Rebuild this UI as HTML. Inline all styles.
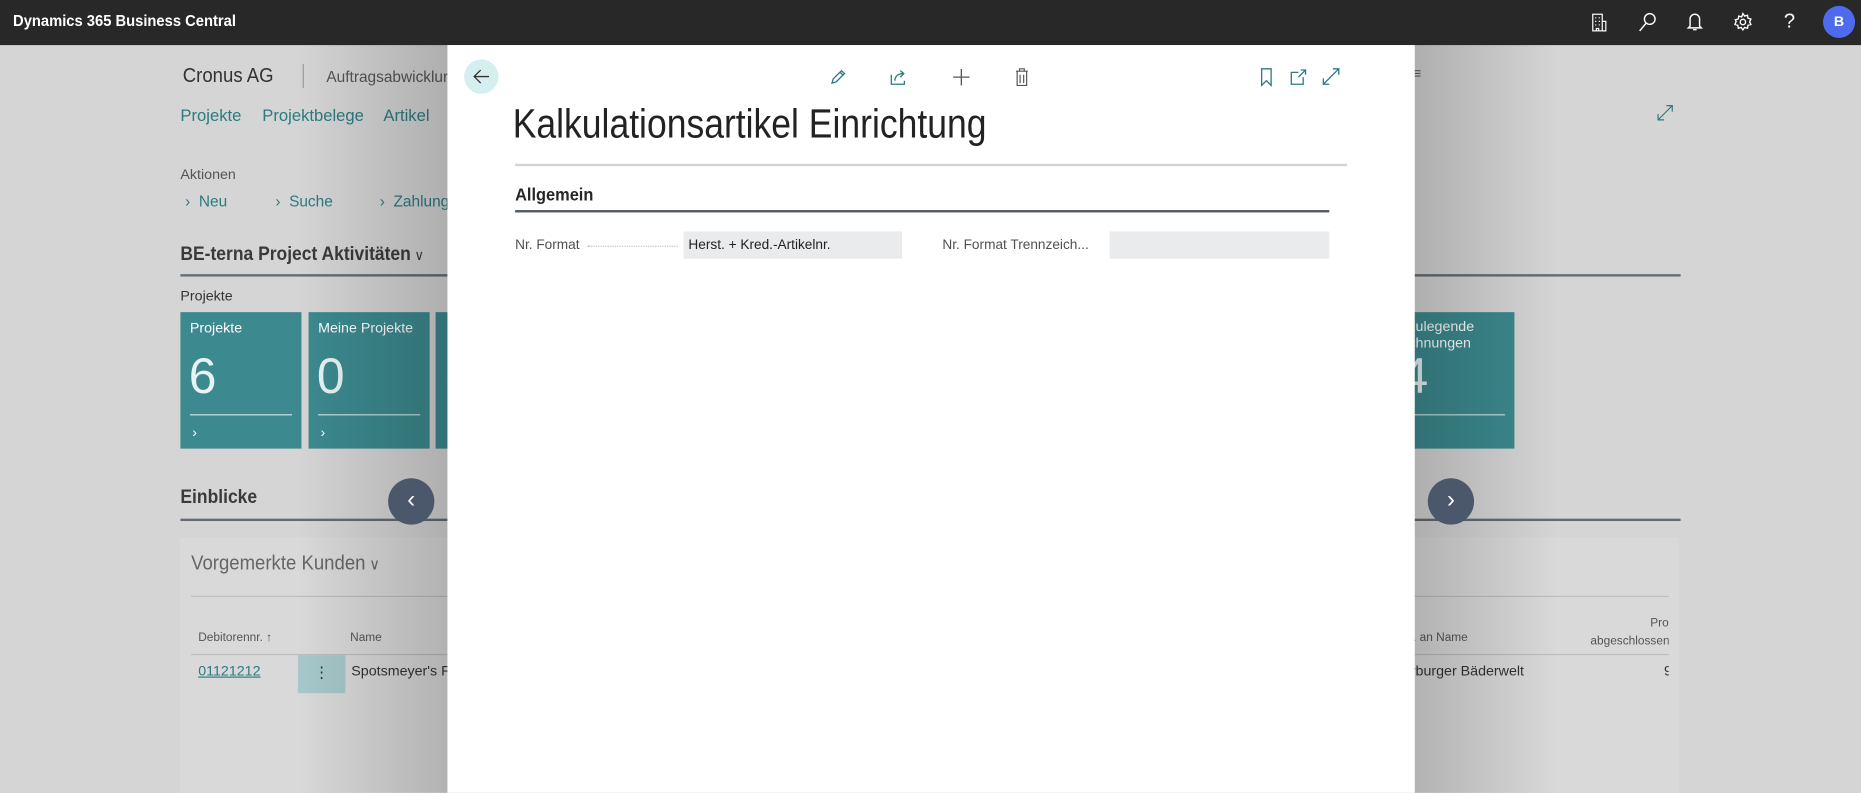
<!DOCTYPE html>
<html><head><meta charset="utf-8"><style>
*{margin:0;padding:0;box-sizing:border-box}
html,body{width:1861px;height:793px;overflow:hidden;background:#d5d5d5;font-family:"Liberation Sans",sans-serif}
#w{position:absolute;left:0;top:0;width:1568px;height:668px;transform:scale(1.18686);transform-origin:0 0;background:#d5d5d5;overflow:hidden}
.a{position:absolute;white-space:nowrap}
.teal{color:#2b7b80}
.tile{position:absolute;top:263px;height:115px;background:#3c8a8f;color:#fff}
.tile .t{position:absolute;left:8px;top:6px;font-size:12px}
.tile .n{position:absolute;left:7px;top:30px;font-size:42px;font-weight:300;color:#e8f3f3}
.tile .l{position:absolute;left:8px;right:8px;top:86px;height:1px;background:#cfe3e4}
.tile .c{position:absolute;left:10px;top:94px;font-size:12px}
svg{position:absolute}
.n9{transform:scaleX(.92);transform-origin:0 0}
</style></head><body><div id="w">
<div class="a" style="left:0;top:0;width:1568px;height:38px;background:#282828"></div>
<div class="a n9" style="left:11px;top:10px;color:#fff;font-weight:bold;font-size:13.5px">Dynamics 365 Business Central</div>
<svg style="left:1340px;top:11px" width="14" height="16" viewBox="0 0 14 16" fill="none" stroke="#fff" stroke-width="1"><rect x="2" y="1" width="8" height="14"/><path d="M10 7h3v8h-3M4 4h1M7 4h1M4 7h1M7 7h1M4 10h1M7 10h1M5 15v-2h2v2"/></svg>
<svg style="left:1380px;top:10px" width="16" height="17" viewBox="0 0 16 17" fill="none" stroke="#fff" stroke-width="1.2"><circle cx="10" cy="6" r="4.5"/><path d="M7 9.5L1.5 16"/></svg>
<svg style="left:1421px;top:10px" width="14" height="17" viewBox="0 0 14 17" fill="none" stroke="#fff" stroke-width="1.2"><path d="M3 12V6a4 4 0 018 0v6l1.5 1.5h-11z M5.5 15h3"/></svg>
<svg style="left:1460px;top:10px" width="17" height="17" viewBox="0 0 24 24" fill="none" stroke="#fff" stroke-width="1.6"><circle cx="12" cy="12" r="3.2"/><path d="M12 2l2 3 3.5-1 .5 3.5 3.5 1-1.5 3.5 1.5 3-3.5 1-.5 3.5-3.5-1-2 3-2-3-3.5 1-.5-3.5-3.5-1 1.5-3.5L3 9.5l3.5-1L7 5l3.5 1z"/></svg>
<div class="a" style="left:1503px;top:8px;color:#fff;font-size:17px">?</div>
<div class="a" style="left:1536px;top:5px;width:27px;height:27px;border-radius:50%;background:#4f6bed;color:#fff;font-size:12px;font-weight:bold;text-align:center;line-height:27px">B</div>

<div class="a n9" style="left:154px;top:54px;font-size:17px;color:#333">Cronus AG</div>
<div class="a" style="left:255px;top:54px;width:1px;height:20px;background:#999"></div>
<div class="a" style="left:275px;top:57px;font-size:13px;color:#555">Auftragsabwicklung</div>
<div class="a teal" style="left:152px;top:89px;font-size:14px">Projekte</div>
<div class="a teal" style="left:221px;top:89px;font-size:14px">Projektbelege</div>
<div class="a teal" style="left:323px;top:89px;font-size:14px">Artikel</div>
<div class="a" style="left:1190px;top:54px;font-size:13px;color:#666">≡</div>
<svg style="left:1396px;top:88px" width="14" height="14" viewBox="0 0 14 14" fill="none" stroke="#2b7b80" stroke-width="1"><path d="M1 13L13 1M8 1h5v5M1 8v5h5"/></svg>
<div class="a" style="left:152px;top:140px;font-size:12px;color:#555">Aktionen</div>
<div class="a teal" style="left:156px;top:162px;font-size:13px">›&nbsp; Neu</div>
<div class="a teal" style="left:232px;top:162px;font-size:13px">›&nbsp; Suche</div>
<div class="a teal" style="left:320px;top:162px;font-size:13px">›&nbsp; Zahlungen</div>
<div class="a n9" style="left:152px;top:206px;font-size:16px;font-weight:bold;color:#3a3a3a">BE-terna Project Aktivitäten<span style="font-weight:normal;font-size:12px"> ∨</span></div>
<div class="a" style="left:152px;top:231px;width:1264px;height:2px;background:#646b75"></div>
<div class="a" style="left:152px;top:242px;font-size:12px;color:#333">Projekte</div>
<div class="tile" style="left:152px;width:102px"><div class="t">Projekte</div><div class="n">6</div><div class="l"></div><div class="c">›</div></div>
<div class="tile" style="left:260px;width:102px"><div class="t">Meine Projekte</div><div class="n">0</div><div class="l"></div><div class="c">›</div></div>
<div class="tile" style="left:367px;width:102px"></div>
<div class="tile" style="left:1100px;width:176px"><div class="t" style="left:80px;top:5px;line-height:14px">nzulegende<br>echnungen</div><div class="n" style="left:80px">4</div><div class="l" style="left:88px"></div></div>
<div class="a n9" style="left:152px;top:411px;font-size:16px;font-weight:bold;color:#3a3a3a">Einblicke</div>
<div class="a" style="left:152px;top:437px;width:1264px;height:2px;background:#646b75"></div>
<div class="a" style="left:152px;top:453px;width:1263px;height:215px;background:#d9d9d9"></div>
<div class="a n9" style="left:161px;top:465px;font-size:17px;color:#666">Vorgemerkte Kunden<span style="font-size:13px"> ∨</span></div>
<div class="a" style="left:161px;top:502px;width:1245px;height:1px;background:#bdbdbd"></div>
<div class="a" style="left:167px;top:532px;font-size:10px;color:#555">Debitorennr. ↑</div>
<div class="a" style="left:295px;top:532px;font-size:10px;color:#555">Name</div>
<div class="a" style="left:1180px;top:532px;font-size:10px;color:#555">ch. an Name</div>
<div class="a" style="left:1340px;top:518px;width:66px;text-align:right;font-size:10px;color:#555;line-height:15px;overflow:hidden">Pro<br>abgeschlossen</div>
<div class="a" style="left:161px;top:551px;width:1245px;height:1px;background:#bdbdbd"></div>
<div class="a" style="left:167px;top:558px;font-size:12px;color:#2b7b80;text-decoration:underline">01121212</div>
<div class="a" style="left:251px;top:552px;width:40px;height:32px;background:#a6c8ca;text-align:center;color:#333;font-size:13px;line-height:30px">⋮</div>
<div class="a" style="left:296px;top:558px;font-size:12px;color:#333">Spotsmeyer's Furnishings</div>
<div class="a" style="left:1182px;top:558px;font-size:12px;color:#333">arburger Bäderwelt</div>
<div class="a" style="left:1402px;top:558px;width:4px;overflow:hidden;font-size:12px;color:#333">9</div>

<div class="a" style="left:250px;top:38px;width:127px;height:630px;background:linear-gradient(to right,rgba(0,0,0,0),rgba(0,0,0,.18))"></div>
<div class="a" style="left:1192px;top:38px;width:120px;height:630px;background:linear-gradient(to left,rgba(0,0,0,0),rgba(0,0,0,.18))"></div>

<div class="a" style="left:327px;top:403px;width:39px;height:39px;border-radius:50%;background:#4b576a;color:#fff;text-align:center;line-height:37px;font-size:20px">‹</div>
<div class="a" style="left:1203px;top:403px;width:39px;height:39px;border-radius:50%;background:#4b576a;color:#fff;text-align:center;line-height:37px;font-size:20px">›</div>

<div class="a" style="left:377px;top:38px;width:815px;height:630px;background:#fff"></div>
<div class="a" style="left:391px;top:50px;width:29px;height:29px;border-radius:50%;background:#d5eef0"></div>
<svg style="left:398px;top:57px" width="15" height="15" viewBox="0 0 15 15" fill="none" stroke="#333" stroke-width="1.1"><path d="M14 7.5H1.5M7 2L1.5 7.5 7 13"/></svg>
<svg style="left:699px;top:58px" width="14" height="14" viewBox="0 0 14 14" fill="none" stroke="#2b7b80" stroke-width="1.1"><path d="M2 12l1-3.5L10 1.5l2.5 2.5L5.5 11z M9 3l2.5 2.5"/></svg>
<svg style="left:750px;top:58px" width="15" height="14" viewBox="0 0 15 14" fill="none" stroke="#2b7b80" stroke-width="1.1"><path d="M1 5v8h11v-3M4 10c0-4 3-6 7-6M8.5 1.5L11.5 4 8.5 7"/></svg>
<svg style="left:803px;top:58px" width="14" height="14" viewBox="0 0 14 14" fill="none" stroke="#555" stroke-width="1.1"><path d="M7 0v14M0 7h14"/></svg>
<svg style="left:855px;top:57px" width="12" height="16" viewBox="0 0 12 16" fill="none" stroke="#555" stroke-width="1"><path d="M1 3h10M4 3V1h4v2M2 3v12h8V3M4.5 6v7M7.5 6v7"/></svg>
<svg style="left:1062px;top:57px" width="10" height="16" viewBox="0 0 10 16" fill="none" stroke="#2b7b80" stroke-width="1.1"><path d="M1 1h8v14l-4-4-4 4z"/></svg>
<svg style="left:1087px;top:58px" width="14" height="14" viewBox="0 0 14 14" fill="none" stroke="#2b7b80" stroke-width="1.1"><path d="M7 3H1v10h10V7M9 1h4v4M13 1L7 7"/></svg>
<svg style="left:1114px;top:57px" width="15" height="15" viewBox="0 0 15 15" fill="none" stroke="#2b7b80" stroke-width="1.1"><path d="M1 14L14 1M9 1h5v5M1 9v5h5"/></svg>
<div class="a" style="left:432px;top:86px;font-size:34px;font-weight:300;color:#222;transform:scaleX(.88);transform-origin:0 0">Kalkulationsartikel Einrichtung</div>
<div class="a" style="left:434px;top:138px;width:701px;height:2px;background:#d2d5d8"></div>
<div class="a n9" style="left:434px;top:156px;font-size:15px;font-weight:bold;color:#262626">Allgemein</div>
<div class="a" style="left:434px;top:177px;width:686px;height:2px;background:#505867"></div>
<div class="a" style="left:434px;top:201px;font-size:11.5px;color:#505050">Nr. Format</div>
<div class="a" style="left:495px;top:207px;width:76px;border-top:1px dotted #c0c0c0"></div>
<div class="a" style="left:576px;top:195px;width:184px;height:23px;background:#eaebed;font-size:11.5px;color:#222;padding:6px 0 0 4px">Herst. + Kred.-Artikelnr.</div>
<div class="a" style="left:794px;top:201px;font-size:11.5px;color:#505050">Nr. Format Trennzeich...</div>
<div class="a" style="left:935px;top:195px;width:185px;height:23px;background:#eaebed"></div>
</div></body></html>
